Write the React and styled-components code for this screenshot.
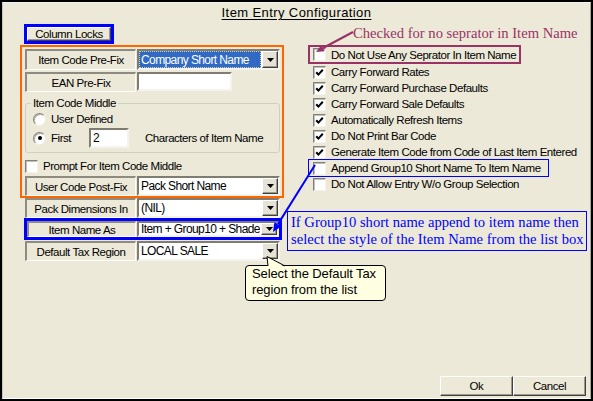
import React from 'react';
import styled, { createGlobalStyle } from 'styled-components';

const UI_FONT = `'Liberation Sans', Arial, sans-serif`;
const NOTE_FONT = `'Liberation Serif', 'Times New Roman', serif`;

const GlobalStyle = createGlobalStyle`
  html, body {
    margin: 0;
    padding: 0;
    background: #ece9d8;
  }
  body {
    font-family: ${UI_FONT};
  }
`;

// window chrome
const Frame = styled.div`
  position: relative;
  box-sizing: border-box;
  width: 593px;
  height: 401px;
  border: 2px solid #000;
  background: #ece9d8;
  font-family: ${UI_FONT};
  font-size: 11.5px;
  letter-spacing: -0.45px;
  color: #000;
`;

const Panel = styled.div`
  box-sizing: border-box;
  height: 100%;
  display: flex;
  flex-direction: column;
  border: 1px solid;
  border-color: #f4f3ee #aca899 #fff #c8c5b4;
`;

const Title = styled.div`
  margin-top: 2px;
  text-align: center;
  font-size: 13px;
  line-height: 16px;
  letter-spacing: 0.4px;
  text-decoration: underline;
  text-underline-offset: 2px;
`;

const Body = styled.div`
  display: flex;
  align-items: flex-start;
  padding-left: 17px;
`;

const LeftCol = styled.div`
  width: 264px;
  display: flex;
  flex-direction: column;
  align-items: flex-start;
`;

const RightCol = styled.div`
  margin-left: 24px;
  display: flex;
  flex-direction: column;
  align-items: flex-start;
`;

// left side parts
const BlueFrame = styled.div`
  box-sizing: border-box;
  width: ${({ $w }) => $w}px;
  height: ${({ $h }) => $h}px;
  margin: ${({ $mt }) => $mt || 0}px 0 0 4px;
  border: 3px solid #0000ff;
`;

const RaisedButton = styled.div`
  box-sizing: border-box;
  display: flex;
  align-items: center;
  justify-content: center;
  width: ${({ $w }) => ($w ? `${$w}px` : '100%')};
  height: ${({ $h }) => ($h ? `${$h}px` : '100%')};
  background: #ece9d8;
  border: 1px solid;
  border-color: #fff #404040 #404040 #fff;
  box-shadow: inset -1px -1px 0 #9d9a8a;
`;

const OrangeBox = styled.div`
  box-sizing: border-box;
  width: 264px;
  height: 153px;
  margin-top: 1px;
  padding: 2px 0 0 3px;
  border: 2px solid #ff6600;
  display: flex;
  flex-direction: column;
  align-items: flex-start;
`;

const FieldRow = styled.div`
  display: flex;
  gap: 1px;
  height: ${({ $h }) => $h || 20}px;
  margin-top: ${({ $mt }) => $mt || 0}px;
  margin-left: ${({ $ml }) => $ml || 0}px;
`;

const FieldLabel = styled.div`
  box-sizing: border-box;
  width: ${({ $w }) => $w || 111}px;
  height: 100%;
  display: flex;
  align-items: center;
  justify-content: center;
  border-style: solid;
  border-width: 2px 1px 1px 2px;
  border-color: #8e8c80 #fff #fff #8e8c80;
  white-space: nowrap;
`;

const Sunken = styled.div`
  box-sizing: border-box;
  background: #fff;
  border: 2px solid;
  border-color: #7f7d72 #f4f3ee #f4f3ee #7f7d72;
`;

const Combo = styled(Sunken)`
  width: ${({ $w }) => $w || 143}px;
  height: 100%;
  display: flex;
  align-items: stretch;
  font-size: 12px;
  letter-spacing: -0.6px;
`;

const ComboText = styled.div`
  flex: 1;
  display: flex;
  align-items: center;
  margin-right: 1px;
  padding-left: 2px;
  white-space: nowrap;
  overflow: hidden;
  ${({ $selected }) =>
    $selected &&
    `
    background: #316ac5;
    color: #fff;
    outline: 1px dotted #d8d2a0;
    outline-offset: -1px;
  `}
`;

const DropButton = styled(RaisedButton)`
  width: 16px;
  height: auto;
  flex: none;
  background: #e6e3d6;
`;

const TextBox = styled(Sunken)`
  width: ${({ $w }) => $w}px;
  height: ${({ $h }) => $h}px;
  display: flex;
  align-items: center;
  padding-left: 2px;
  font-size: 12px;
`;

const Group = styled.fieldset`
  box-sizing: border-box;
  width: 255px;
  min-width: 0;
  margin: 5px 0 0 0;
  padding: 2px 0 4px 0;
  border: 1px solid #d0d0bf;
  border-radius: 3px;
`;

const GroupTitle = styled.legend`
  margin-left: 5px;
  padding: 0 2px;
  line-height: 12px;
`;

const RadioRow = styled.div`
  display: flex;
  align-items: center;
  height: ${({ $h }) => $h || 16}px;
  margin-top: ${({ $mt }) => $mt || 0}px;
  padding-left: 7px;
`;

const RadioDot = styled.span`
  box-sizing: border-box;
  width: 13px;
  height: 13px;
  flex: none;
  display: flex;
  align-items: center;
  justify-content: center;
  border-radius: 50%;
  background: #fff;
  border: 1px solid;
  border-color: #808080 #f0efe8 #f0efe8 #808080;
  box-shadow: inset 1px 1px 0 #b8b5a6;
  &::after {
    content: '';
    width: 4px;
    height: 4px;
    border-radius: 50%;
    background: ${({ $on }) => ($on ? '#000' : 'transparent')};
  }
`;

const OptionText = styled.span`
  margin-left: ${({ $gap }) => ($gap === undefined ? 5 : $gap)}px;
  white-space: nowrap;
  width: ${({ $w }) => ($w ? `${$w}px` : 'auto')};
`;

const CheckBoxBox = styled.span`
  box-sizing: border-box;
  width: 13px;
  height: 13px;
  flex: none;
  display: flex;
  align-items: center;
  justify-content: center;
  background: #fff;
  border: 1px solid;
  border-color: #808080 #f4f3ee #f4f3ee #808080;
  box-shadow: inset 1px 1px 0 #c4c1b2;
`;

const CheckRow = styled.div`
  display: flex;
  align-items: center;
  height: 16px;
  margin-top: ${({ $mt }) => $mt || 0}px;
`;

// right side parts
const NoteLine = styled.div`
  margin: 3px 0 0 45px;
  font-family: ${NOTE_FONT};
  font-size: 14.6px;
  line-height: 18px;
  letter-spacing: 0;
  color: #993366;
  white-space: nowrap;
`;

const PurpleBox = styled.div`
  box-sizing: border-box;
  width: 213px;
  height: 19px;
  margin-top: 3px;
  padding-left: 3px;
  display: flex;
  align-items: center;
  border: 2px solid #993366;
`;

const OptionRow = styled.div`
  box-sizing: border-box;
  display: flex;
  align-items: center;
  height: 16px;
  padding-left: 5px;
  ${({ $boxed }) =>
    $boxed &&
    `
    width: 239px;
    margin-left: 1px;
    padding-left: 4px;
    outline: 1px solid #0000ff;
  `}
`;

const Footer = styled.div`
  margin-top: auto;
  display: flex;
  justify-content: flex-end;
  padding: 0 4px 2px 0;
`;

// overlays: annotations drawn over the dialog
const Arrows = styled.svg`
  position: absolute;
  left: -2px;
  top: -2px;
  pointer-events: none;
`;

const BlueNote = styled.div`
  position: absolute;
  left: 285px;
  top: 209px;
  box-sizing: border-box;
  width: 300px;
  height: 40px;
  padding: 2px 0 0 3px;
  border: 1px solid #0000ff;
  background: #ece9d8;
  font-family: ${NOTE_FONT};
  font-size: 14.6px;
  line-height: 17px;
  letter-spacing: 0;
  color: #0000ff;
  white-space: nowrap;
`;

const Balloon = styled.div`
  position: absolute;
  left: 243px;
  top: 263px;
  box-sizing: border-box;
  width: 141px;
  height: 36px;
  padding: 0 0 0 6px;
  border: 1px solid #000;
  border-radius: 4px;
  background: #ffffe1;
  font-size: 13px;
  line-height: 16px;
  letter-spacing: -0.1px;
  white-space: nowrap;
`;

const BalloonTail = styled.svg`
  position: absolute;
  left: 18px;
  top: -10px;
  overflow: visible;
`;

const Arrow = () => (
  <svg width="7" height="4" viewBox="0 0 7 4">
    <polygon points="0,0 7,0 3.5,4" fill="#000" />
  </svg>
);

const Tick = () => (
  <svg width="9" height="9" viewBox="0 0 9 9">
    <polyline points="1.2,4.2 3.4,6.6 7.8,1.8" fill="none" stroke="#000" strokeWidth="2" />
  </svg>
);

const CheckBox = ({ checked }) => <CheckBoxBox>{checked && <Tick />}</CheckBoxBox>;

const ComboField = ({ label, value, selected, labelWidth, comboWidth }) => (
  <>
    <FieldLabel $w={labelWidth}>{label}</FieldLabel>
    <Combo $w={comboWidth}>
      <ComboText $selected={selected}>{value}</ComboText>
      <DropButton>
        <Arrow />
      </DropButton>
    </Combo>
  </>
);

const options = [
  { label: 'Carry Forward Rates', checked: true },
  { label: 'Carry Forward Purchase Defaults', checked: true },
  { label: 'Carry Forward Sale Defaults', checked: true },
  { label: 'Automatically Refresh Items', checked: true },
  { label: 'Do Not Print Bar Code', checked: true },
  { label: 'Generate Item Code from Code of Last Item Entered', checked: true },
  { label: 'Append Group10 Short Name To Item Name', checked: false, boxed: true },
  { label: 'Do Not Allow Entry W/o Group Selection', checked: false },
];

export default function App() {
  return (
    <>
      <GlobalStyle />
      <Frame>
        <Panel>
          <Title>Item Entry Configuration</Title>
          <Body>
            <LeftCol>
              <BlueFrame $w={90} $h={20} $mt={3}>
                <RaisedButton>Column Locks</RaisedButton>
              </BlueFrame>

              <OrangeBox>
                <FieldRow $h={21}>
                  <ComboField label="Item Code Pre-Fix" value="Company Short Name" selected />
                </FieldRow>
                <FieldRow $mt={2}>
                  <FieldLabel>EAN Pre-Fix</FieldLabel>
                  <TextBox $w={95} $h={19} />
                </FieldRow>

                <Group>
                  <GroupTitle>Item Code Middle</GroupTitle>
                  <RadioRow>
                    <RadioDot />
                    <OptionText>User Defined</OptionText>
                  </RadioRow>
                  <RadioRow $h={20} $mt={1}>
                    <RadioDot $on />
                    <OptionText $w={38}>First</OptionText>
                    <TextBox $w={40} $h={20}>2</TextBox>
                    <OptionText $gap={16}>Characters of Item Name</OptionText>
                  </RadioRow>
                </Group>

                <CheckRow $mt={5}>
                  <CheckBox />
                  <OptionText>Prompt For Item Code Middle</OptionText>
                </CheckRow>
                <FieldRow $mt={2}>
                  <ComboField label="User Code Post-Fix" value="Pack Short Name" />
                </FieldRow>
              </OrangeBox>

              <FieldRow $ml={5}>
                <ComboField label="Pack Dimensions In" value="(NIL)" />
              </FieldRow>
              <BlueFrame $w={258} $h={22}>
                <FieldRow $h={16}>
                  <ComboField label="Item Name As" value="Item + Group10 + Shade" labelWidth={109} comboWidth={142} />
                </FieldRow>
              </BlueFrame>
              <FieldRow $ml={5} $mt={1}>
                <ComboField label="Default Tax Region" value="LOCAL SALE" />
              </FieldRow>
            </LeftCol>

            <RightCol>
              <NoteLine>Checked for no seprator in Item Name</NoteLine>
              <PurpleBox>
                <CheckBox />
                <OptionText>Do Not Use Any Seprator In Item Name</OptionText>
              </PurpleBox>
              {options.map((opt) => (
                <OptionRow key={opt.label} $boxed={opt.boxed}>
                  <CheckBox checked={opt.checked} />
                  <OptionText>{opt.label}</OptionText>
                </OptionRow>
              ))}
            </RightCol>
          </Body>

          <Footer>
            <RaisedButton $w={73} $h={20}>Ok</RaisedButton>
            <RaisedButton $w={73} $h={20}>Cancel</RaisedButton>
          </Footer>
        </Panel>

        <BlueNote>
          If Group10 short name append to item name then
          <br />
          select the style of the Item Name from the list box
        </BlueNote>

        <Balloon>
          <BalloonTail width="20" height="11" viewBox="0 0 20 11">
            <path d="M4,11 L3,0.5 L21,11 Z" fill="#ffffe1" stroke="none" />
            <path d="M4,10 L3,0.5 L21,10" fill="none" stroke="#000" strokeWidth="1" />
          </BalloonTail>
          Select the Default Tax
          <br />
          region from the list
        </Balloon>

        <Arrows width="593" height="401" viewBox="0 0 593 401">
          <line x1="353" y1="32" x2="323" y2="48" stroke="#993366" strokeWidth="2" />
          <polygon points="316,52 321.4,45.1 324.7,51.3" fill="#993366" />
          <line x1="315" y1="165" x2="277.8" y2="224.4" stroke="#0000ff" strokeWidth="2" />
          <polygon points="273,232 274.4,222.3 281.2,226.5" fill="#0000ff" />
        </Arrows>
      </Frame>
    </>
  );
}
